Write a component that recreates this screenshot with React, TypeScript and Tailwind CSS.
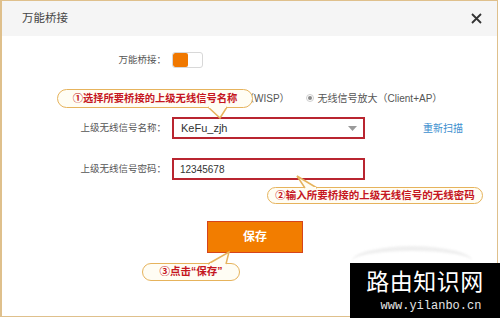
const cjk = "font-['Liberation_Sans','Noto_Sans_CJK_SC',sans-serif]";

const Label = ({ text }: { text: string }) => (
  <span className="w-[164px] shrink-0 text-right text-[9.5px] text-[#555]">{text}</span>
);

const Radio = ({ checked }: { checked?: boolean }) => (
  <span className="flex h-[8px] w-[8px] items-center justify-center rounded-full border border-[#cfcfcf] bg-white">
    {checked && <span className="h-[4px] w-[4px] rounded-full bg-[#8a8a8a]" />}
  </span>
);

export default function App() {
  return (
    <div className={`relative h-[318px] w-[500px] overflow-hidden bg-white ${cjk}`}>
      <div className="flex h-[317px] w-[498px] flex-col border border-l-2 border-[#dfc08c]">
        {/* header */}
        <div className="flex h-[35px] shrink-0 items-center justify-between bg-[#f5f5f5] pl-[20px] pr-[15px]">
          <span className="text-[11.5px] text-[#444]">万能桥接</span>
          <svg width="11" height="11" viewBox="0 0 11 11">
            <path d="M1 1 L10 10 M10 1 L1 10" stroke="#333" strokeWidth="1.8" />
          </svg>
        </div>

        {/* toggle */}
        <div className="mt-[16px] flex h-[16px] items-center">
          <Label text="万能桥接：" />
          <div className="ml-[6px] flex h-[16px] w-[31px] overflow-hidden rounded-[3px] border border-[#d8d8d8] bg-white">
            <div className="w-[15px] rounded-[2px] bg-[#f07800]" />
          </div>
        </div>

        {/* mode */}
        <div className="mt-[20px] flex h-[20px] items-center">
          <Label text="" />
          <div className="ml-[6px] flex items-center text-[10px] text-[#555]">
            <Radio />
            <span className="ml-[24px]">无线中继（WISP）</span>
            <span className="ml-[16px]">
              <Radio checked />
            </span>
            <span className="ml-[4px]">无线信号放大（Client+AP）</span>
          </div>
        </div>

        {/* ssid */}
        <div className="mt-[9px] flex h-[22px] items-center">
          <Label text="上级无线信号名称：" />
          <div className="ml-[6px] flex h-[22px] w-[193px] items-center justify-between border-2 border-[#b92530] pl-[7px] pr-[6px]">
            <span className="text-[11px] text-[#333]">KeFu_zjh</span>
            <svg width="9" height="5" viewBox="0 0 9 5">
              <path d="M0 0 H9 L4.5 5 Z" fill="#9a9a9a" />
            </svg>
          </div>
          <span className="ml-[58px] text-[10px] text-[#3d8fcf]">重新扫描</span>
        </div>

        {/* password */}
        <div className="mt-[19px] flex h-[22px] items-center">
          <Label text="上级无线信号密码：" />
          <div className="ml-[6px] flex h-[22px] w-[193px] items-center border-2 border-[#b92530] pl-[6px]">
            <span className="text-[10px] text-[#333]">12345678</span>
          </div>
        </div>

        {/* save */}
        <button className="ml-[205px] mt-[41px] flex h-[32px] w-[96px] items-center justify-center border-[1.5px] border-[#d5441c] bg-[#f27d00] text-[12px] font-bold text-white">
          保存
        </button>
      </div>

      {/* callouts */}
      <div className="absolute left-[57px] top-[89px] flex h-[19px] w-[196px] items-center justify-center rounded-full border-[1.5px] border-[#e6b35c] bg-[#fffdf4] text-[10.3px] font-bold text-[#c5161f]">
        ①选择所要桥接的上级无线信号名称
      </div>
      <div className="absolute left-[267px] top-[187px] flex h-[17px] w-[216px] items-center justify-center rounded-full border-[1.5px] border-[#e6b35c] bg-[#fffdf4] text-[10.5px] font-bold text-[#c5161f]">
        ②输入所要桥接的上级无线信号的无线密码
      </div>
      <div className="absolute left-[142px] top-[263px] flex h-[18px] w-[98px] items-center justify-center rounded-full border-[1.5px] border-[#e6b35c] bg-[#fffdf4] text-[10.5px] font-bold text-[#c5161f]">
        ③点击“保存”
      </div>
      <svg className="pointer-events-none absolute left-0 top-0" width="500" height="318">
        <g fill="#fffdf4" stroke="#e6b35c" strokeWidth="1.5">
          <path d="M208 107 L220 118 L227 107" />
          <path d="M305 188 L297 176 L317 188" />
          <path d="M208 264 L229 252 L226 264" />
        </g>
        <g fill="#fffdf4">
          <rect x="209" y="106" width="17" height="2" />
          <rect x="306" y="187" width="10" height="2" />
          <rect x="210" y="263" width="15" height="2" />
        </g>
      </svg>

      {/* watermark */}
      <div className="absolute left-[352px] top-[246px] h-[30px] w-[120px] rounded-[50%] border-t-[5px] border-[#efefef] blur-[1px]" />
      <div className="absolute bottom-0 right-0 flex h-[55px] w-[150px] flex-col items-center bg-black">
        <span className="mt-[8px] text-[23px] leading-none tracking-[0.5px] text-white">路由知识网</span>
        <span className="ml-[12px] mt-[6px] font-['Liberation_Mono',monospace] text-[12px] leading-none text-[#e5e5e5]">
          www.yilanbo.cn
        </span>
      </div>
    </div>
  );
}
